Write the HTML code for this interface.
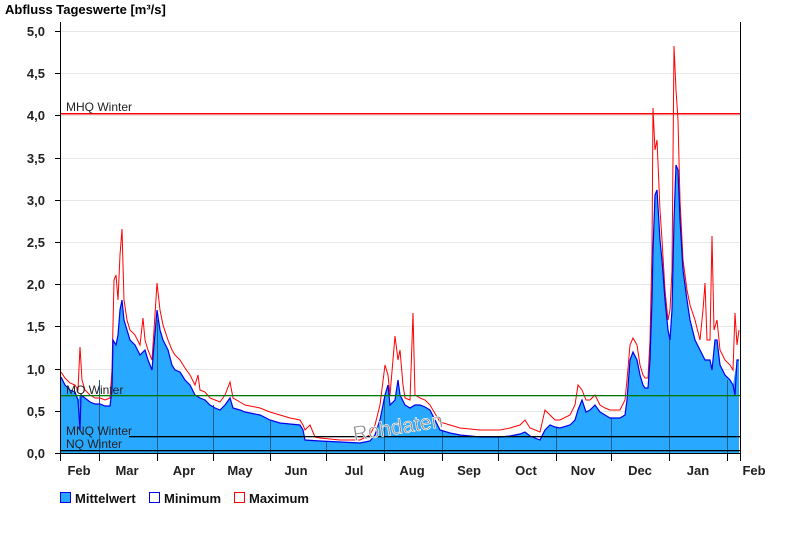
<!DOCTYPE html>
<html><head><meta charset="utf-8"><style>
html,body{margin:0;padding:0;background:#fff;}
svg{display:block;font-family:"Liberation Sans",Arial,sans-serif;}
.c{shape-rendering:crispEdges;}
</style></head><body>
<svg width="800" height="550" viewBox="0 0 800 550" xmlns="http://www.w3.org/2000/svg">
<rect width="800" height="550" fill="#fff"/>
<text x="5" y="14" font-size="13" font-weight="bold" fill="#000">Abfluss Tageswerte [m³/s]</text>
<g stroke="#e6e6e6" stroke-width="1" class="c">
<line x1="61" y1="31.5" x2="740" y2="31.5"/>
<line x1="61" y1="73.5" x2="740" y2="73.5"/>
<line x1="61" y1="115.5" x2="740" y2="115.5"/>
<line x1="61" y1="158.5" x2="740" y2="158.5"/>
<line x1="61" y1="200.5" x2="740" y2="200.5"/>
<line x1="61" y1="242.5" x2="740" y2="242.5"/>
<line x1="61" y1="284.5" x2="740" y2="284.5"/>
<line x1="61" y1="326.5" x2="740" y2="326.5"/>
<line x1="61" y1="369.5" x2="740" y2="369.5"/>
<line x1="61" y1="411.5" x2="740" y2="411.5"/>
</g>
<polygon fill="#29a8ff" points="61,453 61,377 65,385 70,390 75,392 78,400 80,395 85,398 90,402 95,404 100,404 105,406 110,406 112,390 113,340 116,345 118,335 120,310 122,300 124,320 127,330 130,340 135,345 140,355 145,350 148,360 150,365 152,370 154,345 157,310 160,330 163,340 168,350 172,365 175,370 180,372 185,380 190,385 195,395 200,398 205,400 210,405 215,408 220,410 225,405 230,398 233,408 240,410 245,412 250,413 260,415 270,420 280,423 290,424 300,425 303,430 305,440 320,441 340,442 360,443 370,441 375,435 380,420 385,395 388,385 390,405 395,400 398,380 400,395 405,405 410,408 415,405 420,405 425,407 430,410 440,430 450,433 460,435 480,437 500,437 510,436 520,434 525,432 530,436 540,440 545,430 550,425 555,427 560,428 570,425 575,420 578,410 582,400 586,412 590,410 595,405 600,412 605,415 610,418 620,418 625,415 627,400 630,360 633,352 637,360 640,375 643,385 645,388 648,388 650,360 652,300 653,250 655,195 657,190 660,240 662,260 665,300 668,330 670,340 672,310 674,220 676,165 678,170 680,220 683,270 687,300 690,320 695,340 700,350 705,360 710,360 712,370 715,340 717,340 720,365 725,375 730,380 733,385 737,360 739,360 739,453"/>
<g stroke="#1f5f8a" stroke-width="1" class="c">
<line x1="99.5" y1="380" x2="99.5" y2="453"/><line x1="157.5" y1="320" x2="157.5" y2="453"/><line x1="213.5" y1="405" x2="213.5" y2="453"/><line x1="270.5" y1="420" x2="270.5" y2="453"/><line x1="326.5" y1="441" x2="326.5" y2="453"/><line x1="384.5" y1="395" x2="384.5" y2="453"/><line x1="442.5" y1="430" x2="442.5" y2="453"/><line x1="498.5" y1="437" x2="498.5" y2="453"/><line x1="556.5" y1="428" x2="556.5" y2="453"/><line x1="611.5" y1="418" x2="611.5" y2="453"/><line x1="669.5" y1="340" x2="669.5" y2="453"/><line x1="727.5" y1="380" x2="727.5" y2="453"/>
</g>
<polyline fill="none" stroke="#ff0000" stroke-width="1" points="61,372 65,378 70,383 75,385 78,390 80,347 82,380 85,390 90,395 95,398 100,398 105,400 110,398 112,370 114,280 116,275 118,300 120,255 122,229 124,300 127,320 130,330 135,335 140,345 143,318 145,340 148,350 150,355 152,360 154,330 157,283 160,310 163,325 168,340 172,350 175,355 180,360 185,368 190,375 195,385 198,375 200,390 205,392 210,398 215,400 220,402 225,395 230,382 233,398 240,402 245,405 250,406 260,408 270,412 280,415 290,418 300,420 303,425 305,430 310,425 315,437 320,438 340,440 360,440 370,435 375,425 380,405 385,365 388,375 390,395 395,336 398,360 400,350 403,385 405,398 410,400 413,313 415,395 420,398 425,400 430,405 440,422 450,425 460,428 480,430 500,430 510,428 520,425 525,420 530,428 540,432 545,410 550,415 555,420 560,420 570,415 575,405 578,385 582,390 586,400 590,400 595,395 600,405 605,408 610,410 620,410 625,400 627,380 630,345 633,338 637,345 640,365 643,375 645,378 648,378 650,340 652,250 653,108 655,150 657,140 660,210 662,240 665,290 668,320 670,310 672,270 674,46 676,90 678,120 680,200 683,260 687,290 690,305 695,320 700,340 703,310 705,283 707,340 710,340 712,236 714,330 717,320 720,350 725,360 730,365 733,370 735,313 737,345 739,330"/>
<polyline fill="none" stroke="#0000ee" stroke-width="1.2" points="61,377 65,385 70,390 75,392 78,400 80,430 81,395 85,398 90,402 95,404 100,404 105,406 110,406 112,390 113,340 116,345 118,335 120,310 122,300 124,320 127,330 130,340 135,345 140,355 145,350 148,360 150,365 152,370 154,345 157,310 160,330 163,340 168,350 172,365 175,370 180,372 185,380 190,385 195,395 200,398 205,400 210,405 215,408 220,410 225,405 230,398 233,408 240,410 245,412 250,413 260,415 270,420 280,423 290,424 300,425 303,430 305,440 320,441 340,442 360,443 370,441 375,435 380,420 385,395 388,385 390,405 395,400 398,380 400,395 405,405 410,408 415,405 420,405 425,407 430,410 440,430 450,433 460,435 480,437 500,437 510,436 520,434 525,432 530,436 540,440 545,430 550,425 555,427 560,428 570,425 575,420 578,410 582,400 586,412 590,410 595,405 600,412 605,415 610,418 620,418 625,415 627,400 630,360 633,352 637,360 640,375 643,385 645,388 648,388 650,360 652,300 653,250 655,195 657,190 660,240 662,260 665,300 668,330 670,340 672,310 674,220 676,165 678,170 680,220 683,270 687,300 690,320 695,340 700,350 705,360 710,360 712,370 715,340 717,340 720,365 725,375 730,380 733,385 735,395 737,360 739,360"/>
<rect x="61" y="113" width="679" height="1.5" fill="#ff0000"/>
<rect x="61" y="395" width="679" height="1.3" fill="#007700"/>
<rect x="129" y="436" width="611" height="1.3" fill="#000"/>
<rect x="61" y="450" width="679" height="1.3" fill="#000"/>
<g font-size="12" fill="#222">
<text x="66" y="111">MHQ Winter</text>
<text x="66" y="394">MQ Winter</text>
<text x="66" y="435">MNQ Winter</text>
<text x="66" y="448">NQ Winter</text>
</g>
<text x="398" y="434" font-size="21" fill="#8a8a8a" stroke="#fff" stroke-width="0.6" text-anchor="middle" transform="rotate(-9 398 428)">Rohdaten</text>
<g class="c">
<line x1="60.5" y1="22" x2="60.5" y2="461" stroke="#000"/>
<line x1="740.5" y1="22" x2="740.5" y2="461" stroke="#000"/>
<line x1="55" y1="453.5" x2="741" y2="453.5" stroke="#000"/>
<g stroke="#000">
<line x1="55" y1="31.5" x2="61" y2="31.5"/><line x1="55" y1="73.5" x2="61" y2="73.5"/><line x1="55" y1="115.5" x2="61" y2="115.5"/><line x1="55" y1="158.5" x2="61" y2="158.5"/><line x1="55" y1="200.5" x2="61" y2="200.5"/><line x1="55" y1="242.5" x2="61" y2="242.5"/><line x1="55" y1="284.5" x2="61" y2="284.5"/><line x1="55" y1="326.5" x2="61" y2="326.5"/><line x1="55" y1="369.5" x2="61" y2="369.5"/><line x1="55" y1="411.5" x2="61" y2="411.5"/>
<line x1="99.5" y1="453" x2="99.5" y2="461"/><line x1="157.5" y1="453" x2="157.5" y2="461"/><line x1="213.5" y1="453" x2="213.5" y2="461"/><line x1="270.5" y1="453" x2="270.5" y2="461"/><line x1="326.5" y1="453" x2="326.5" y2="461"/><line x1="384.5" y1="453" x2="384.5" y2="461"/><line x1="442.5" y1="453" x2="442.5" y2="461"/><line x1="498.5" y1="453" x2="498.5" y2="461"/><line x1="556.5" y1="453" x2="556.5" y2="461"/><line x1="611.5" y1="453" x2="611.5" y2="461"/><line x1="669.5" y1="453" x2="669.5" y2="461"/><line x1="727.5" y1="453" x2="727.5" y2="461"/>
</g>
</g>
<g font-size="13" font-weight="bold" fill="#222" text-anchor="end">
<text x="45" y="36">5,0</text><text x="45" y="78">4,5</text><text x="45" y="120">4,0</text><text x="45" y="163">3,5</text><text x="45" y="205">3,0</text><text x="45" y="247">2,5</text><text x="45" y="289">2,0</text><text x="45" y="331">1,5</text><text x="45" y="374">1,0</text><text x="45" y="416">0,5</text><text x="45" y="458">0,0</text>
</g>
<g font-size="13" font-weight="bold" fill="#222" text-anchor="middle">
<text x="79" y="475">Feb</text><text x="127" y="475">Mar</text><text x="184" y="475">Apr</text><text x="240" y="475">May</text><text x="296" y="475">Jun</text><text x="354" y="475">Jul</text><text x="412" y="475">Aug</text><text x="469" y="475">Sep</text><text x="526" y="475">Oct</text><text x="583" y="475">Nov</text><text x="640" y="475">Dec</text><text x="698" y="475">Jan</text><text x="754" y="475">Feb</text>
</g>
<g class="c">
<rect x="60.5" y="492.5" width="10" height="10" fill="#29a8ff" stroke="#0000ee"/>
<rect x="149.5" y="492.5" width="10" height="10" fill="#fff" stroke="#0000ee"/>
<rect x="234.5" y="492.5" width="10" height="10" fill="#fff" stroke="#ff0000"/>
</g>
<g font-size="13" font-weight="bold" fill="#111">
<text x="75" y="503">Mittelwert</text><text x="164" y="503">Minimum</text><text x="249" y="503">Maximum</text>
</g>
</svg>
</body></html>
